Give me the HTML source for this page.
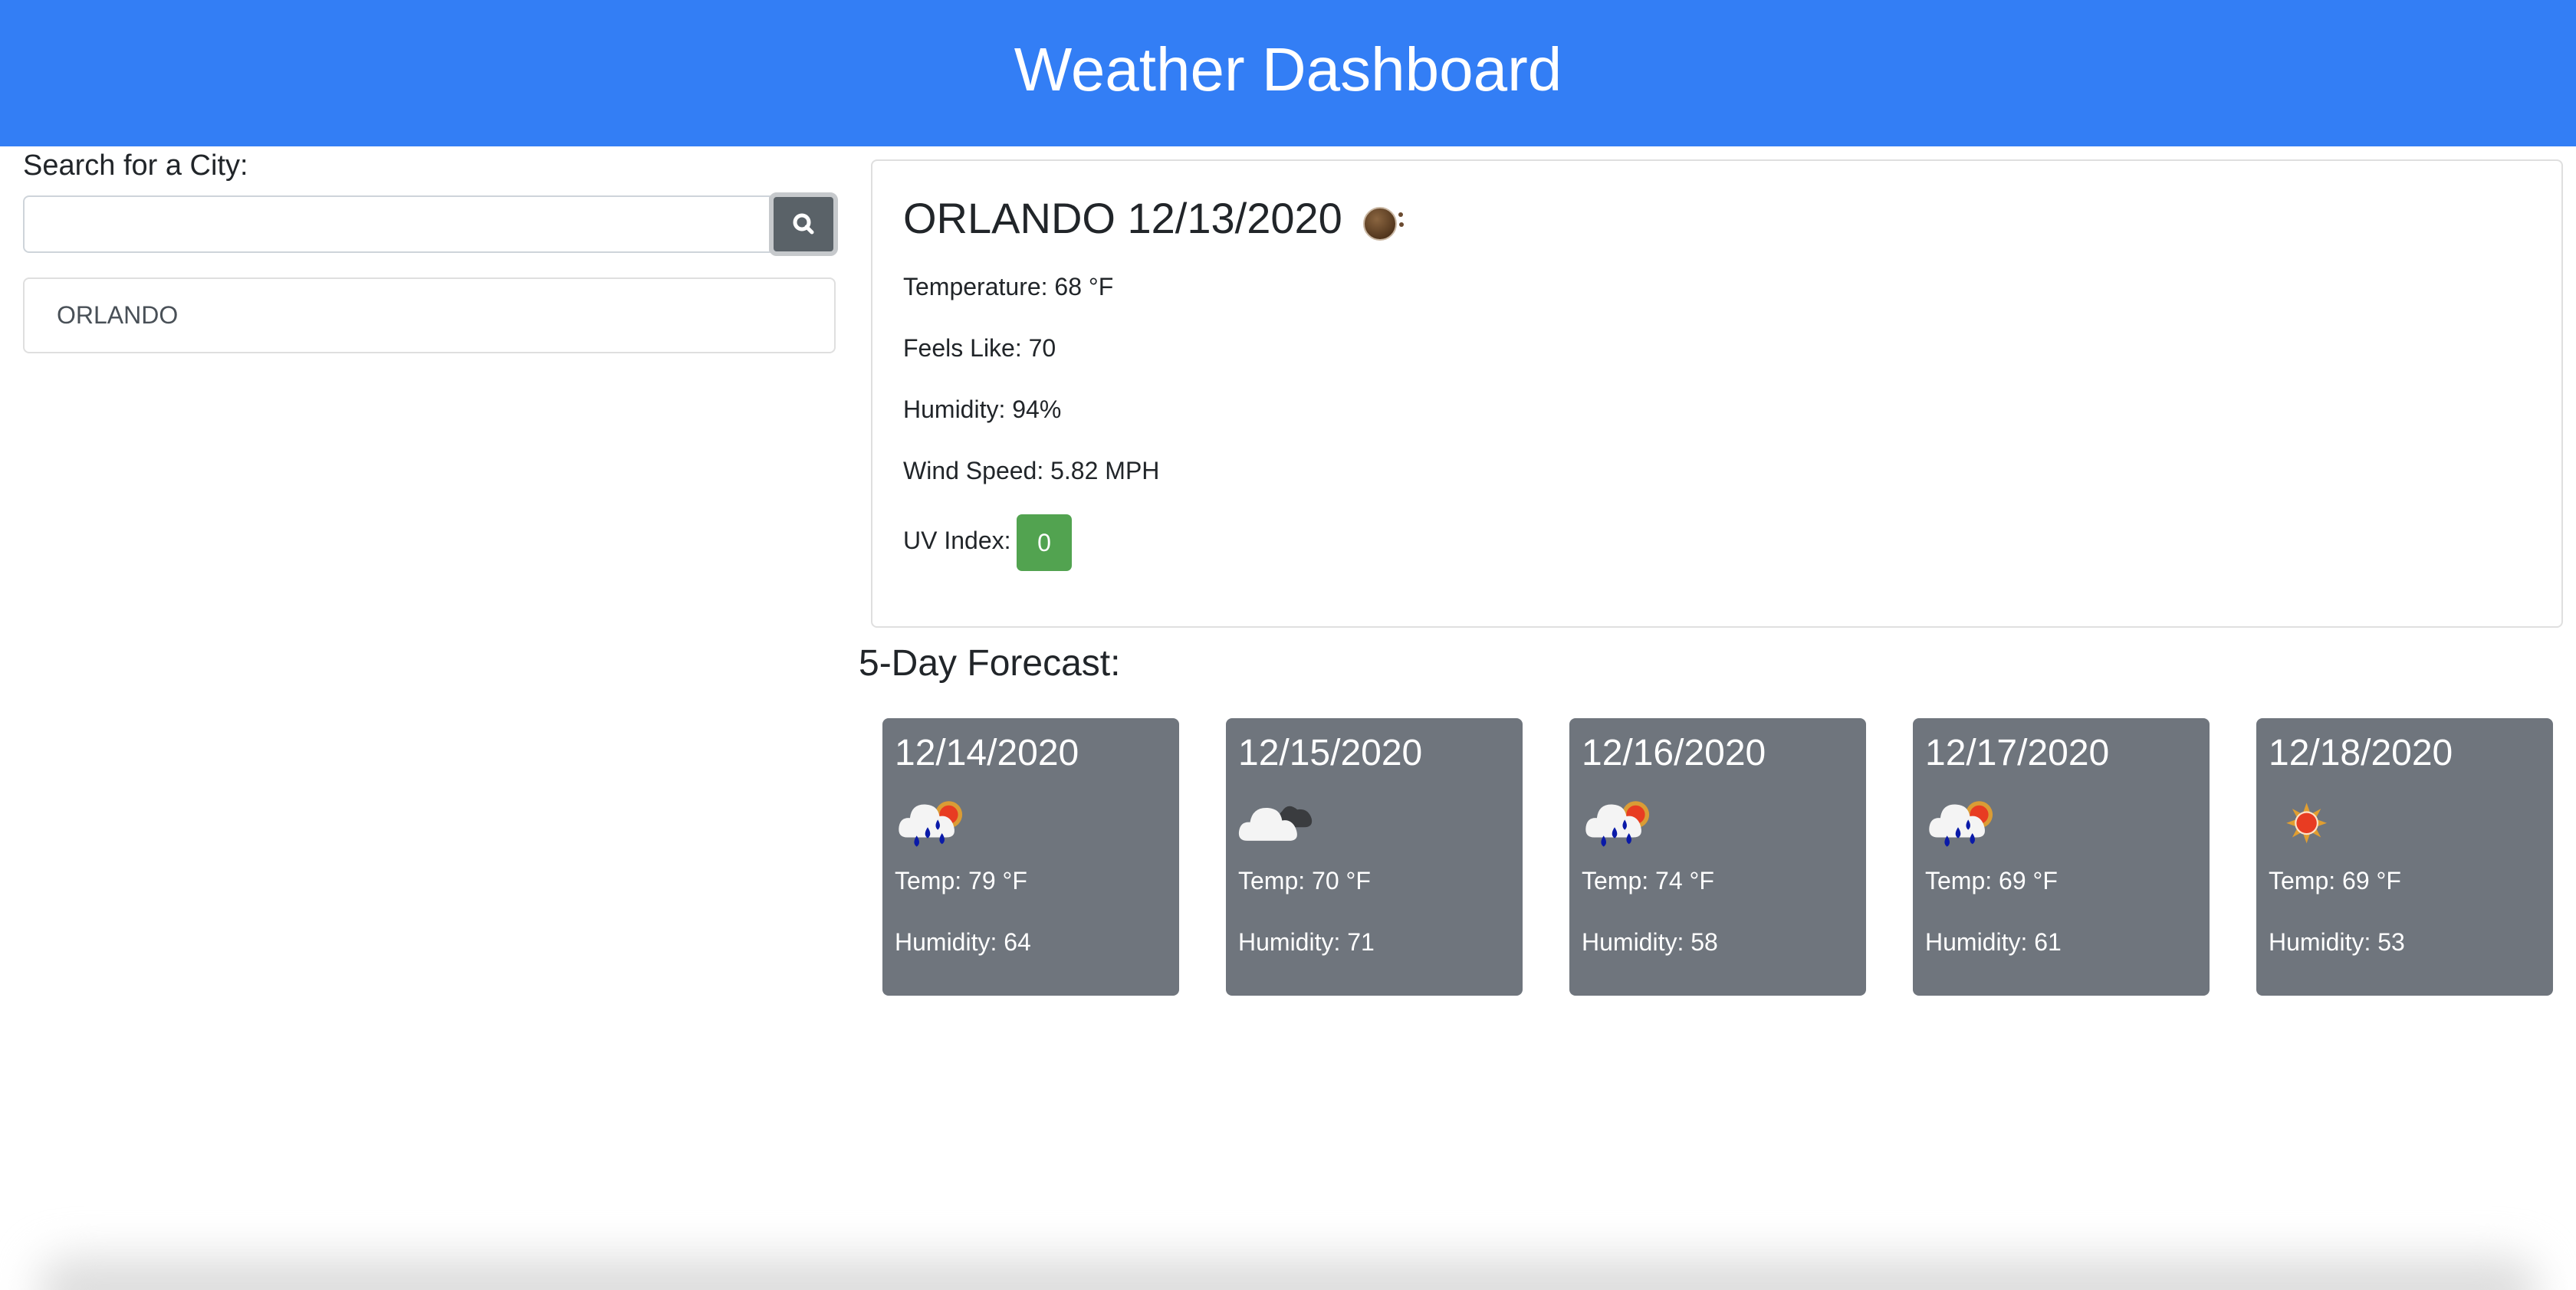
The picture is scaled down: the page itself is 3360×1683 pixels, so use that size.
<!DOCTYPE html>
<html><head><meta charset="utf-8">
<style>
*{box-sizing:border-box;margin:0;padding:0}
html,body{width:3360px;height:1683px;overflow:hidden;background:#fff;font-family:"Liberation Sans",sans-serif;color:#212529;position:relative}
.abs{position:absolute}
header{position:absolute;left:0;top:0;width:3360px;height:191px;background:#337ef5;color:#fff;font-size:80px;text-align:center;line-height:182px}
.lbl{left:30px;top:193px;font-size:38px;line-height:46px}
.inp{left:30px;top:255px;width:975px;height:75px;border:2px solid #ced4da;border-radius:8px 0 0 8px}
.btn{left:1003px;top:251px;width:90px;height:83px;border:6px solid #c6c9cc;border-radius:10px;background:#5a6268}
.li{left:30px;top:362px;width:1060px;height:99px;border:2px solid #dfdfdf;border-radius:8px;font-size:32px;color:#495057;padding-left:42px;line-height:95px}
.card{left:1136px;top:208px;width:2207px;height:611px;border:2px solid #dfdfdf;border-radius:8px}
.t{position:absolute;left:1178px;font-size:32px;line-height:40px}
.fc{position:absolute;top:937px;width:387px;height:362px;background:#6f757d;border-radius:8px;color:#fff}
.fc .d{position:absolute;left:16px;top:16px;font-size:48px;line-height:60px}
.fc .tp{position:absolute;left:16px;top:192px;font-size:32px;line-height:40px}
.fc .hm{position:absolute;left:16px;top:272px;font-size:32px;line-height:40px}
.fc svg{position:absolute;left:4px;top:78px}
.sh{position:absolute;left:50px;right:50px;top:1640px;height:90px;background:#ddd;filter:blur(28px);border-radius:40px}
</style></head><body>
<header>Weather Dashboard</header>
<div class="abs lbl">Search for a City:</div>
<div class="abs inp"></div>
<div class="abs btn"><svg width="78" height="71" viewBox="0 0 78 71" style="position:absolute;left:0;top:0"><circle cx="37" cy="33" r="9" fill="none" stroke="#fff" stroke-width="5"/><line x1="43" y1="39" x2="50" y2="46" stroke="#fff" stroke-width="5" stroke-linecap="round"/></svg></div>
<div class="abs li">ORLANDO</div>
<div class="abs card"></div>
<div class="t" style="top:250px;font-size:56px;line-height:70px">ORLANDO 12/13/2020</div>
<svg class="abs" style="left:1770px;top:260px" width="70" height="60" viewBox="0 0 70 60"><defs><radialGradient id="br" cx="0.4" cy="0.35" r="0.7"><stop offset="0" stop-color="#8a6540"/><stop offset="1" stop-color="#4a2f18"/></radialGradient></defs><circle cx="30" cy="32" r="21" fill="url(#br)" stroke="#c9b7a3" stroke-width="2"/><circle cx="57" cy="20" r="3" fill="#6a4a30"/><circle cx="58" cy="33" r="3" fill="#6a4a30"/></svg>
<div class="t" style="top:354px">Temperature: 68 °F</div>
<div class="t" style="top:434px">Feels Like: 70</div>
<div class="t" style="top:514px">Humidity: 94%</div>
<div class="t" style="top:594px">Wind Speed: 5.82 MPH</div>
<div class="t" style="top:685px">UV Index:</div>
<div class="abs" style="left:1326px;top:671px;width:72px;height:74px;background:#52a350;border-radius:7px;color:#fff;font-size:32px;text-align:center;line-height:74px">0</div>
<div class="abs" style="left:1120px;top:836px;font-size:48px;line-height:60px">5-Day Forecast:</div>

<div class="fc" style="left:1151px"><div class="d">12/14/2020</div>
<svg width="110" height="100" viewBox="0 0 100 90"><circle cx="75" cy="43" r="16" fill="#f5a623" opacity=".8"/><circle cx="75" cy="43" r="11" fill="#e83c22"/><path d="M26 70 Q14 70 16 57 Q18 46 29 47 Q31 30 48 31 Q62 32 64 45 Q75 43 80 54 Q86 70 72 70 Z" fill="#f4f4f4"/><g fill="#0a1aa8"><path d="M37 68 Q31 77 37 81 Q43 77 37 68Z"/><path d="M50 58 Q44 67 50 71 Q56 67 50 58Z"/><path d="M62 49 Q57 57 62 61 Q67 57 62 49Z"/><path d="M67 65 Q61 74 67 78 Q73 74 67 65Z"/></g></svg>
<div class="tp">Temp: 79 °F</div><div class="hm">Humidity: 64</div></div>

<div class="fc" style="left:1599px"><div class="d">12/15/2020</div>
<svg width="110" height="100" viewBox="0 0 100 90"><path d="M62 58 Q55 46 63 39 Q70 28 81 37 Q94 35 98 48 Q100 58 89 58 Z" fill="#3a3c3f"/><path d="M22 74 Q10 74 12 62 Q14 51 25 52 Q28 34 46 35 Q61 36 63 50 Q74 48 79 59 Q85 74 71 74 Z" fill="#f4f4f4"/></svg>
<div class="tp">Temp: 70 °F</div><div class="hm">Humidity: 71</div></div>

<div class="fc" style="left:2047px"><div class="d">12/16/2020</div>
<svg width="110" height="100" viewBox="0 0 100 90"><circle cx="75" cy="43" r="16" fill="#f5a623" opacity=".8"/><circle cx="75" cy="43" r="11" fill="#e83c22"/><path d="M26 70 Q14 70 16 57 Q18 46 29 47 Q31 30 48 31 Q62 32 64 45 Q75 43 80 54 Q86 70 72 70 Z" fill="#f4f4f4"/><g fill="#0a1aa8"><path d="M37 68 Q31 77 37 81 Q43 77 37 68Z"/><path d="M50 58 Q44 67 50 71 Q56 67 50 58Z"/><path d="M62 49 Q57 57 62 61 Q67 57 62 49Z"/><path d="M67 65 Q61 74 67 78 Q73 74 67 65Z"/></g></svg>
<div class="tp">Temp: 74 °F</div><div class="hm">Humidity: 58</div></div>

<div class="fc" style="left:2495px"><div class="d">12/17/2020</div>
<svg width="110" height="100" viewBox="0 0 100 90"><circle cx="75" cy="43" r="16" fill="#f5a623" opacity=".8"/><circle cx="75" cy="43" r="11" fill="#e83c22"/><path d="M26 70 Q14 70 16 57 Q18 46 29 47 Q31 30 48 31 Q62 32 64 45 Q75 43 80 54 Q86 70 72 70 Z" fill="#f4f4f4"/><g fill="#0a1aa8"><path d="M37 68 Q31 77 37 81 Q43 77 37 68Z"/><path d="M50 58 Q44 67 50 71 Q56 67 50 58Z"/><path d="M62 49 Q57 57 62 61 Q67 57 62 49Z"/><path d="M67 65 Q61 74 67 78 Q73 74 67 65Z"/></g></svg>
<div class="tp">Temp: 69 °F</div><div class="hm">Humidity: 61</div></div>

<div class="fc" style="left:2943px"><div class="d">12/18/2020</div>
<svg width="110" height="100" viewBox="0 0 100 90"><g fill="#f5a623" opacity=".85" transform="translate(56 53)"><polygon points="0,-24 5,-10 -5,-10"/><polygon points="0,24 5,10 -5,10"/><polygon points="-24,0 -10,5 -10,-5"/><polygon points="24,0 10,5 10,-5"/><polygon points="-17,-17 -4,-10 -10,-4"/><polygon points="17,17 4,10 10,4"/><polygon points="17,-17 10,-4 4,-10"/><polygon points="-17,17 -10,4 -4,10"/></g><circle cx="56" cy="53" r="14" fill="#fbe3c8"/><circle cx="56" cy="53" r="12" fill="#e83c22"/></svg>
<div class="tp">Temp: 69 °F</div><div class="hm">Humidity: 53</div></div>

<div class="sh"></div>
</body></html>
